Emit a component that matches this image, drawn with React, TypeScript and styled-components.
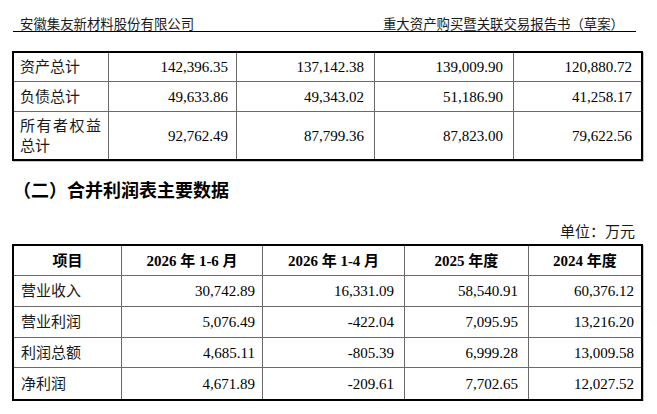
import styled, { createGlobalStyle } from "styled-components"

const GlobalStyle = createGlobalStyle`
    body {
        margin: 0;
        background: #ffffff;
        color: #000000;
        font-family: "Liberation Serif", "Noto Sans CJK SC", serif;
        text-spacing-trim: space-all;
    }
`

type Row = {
    label: string
    values: string[]
}

const balanceRows: Row[] = [
    { label: '资产总计', values: ['142,396.35', '137,142.38', '139,009.90', '120,880.72'] },
    { label: '负债总计', values: ['49,633.86', '49,343.02', '51,186.90', '41,258.17'] },
    { label: '所有者权益总计', values: ['92,762.49', '87,799.36', '87,823.00', '79,622.56'] },
]

const profitHeader = ['项目', '2026 年 1-6 月', '2026 年 1-4 月', '2025 年度', '2024 年度']

const profitRows: Row[] = [
    { label: '营业收入', values: ['30,742.89', '16,331.09', '58,540.91', '60,376.12'] },
    { label: '营业利润', values: ['5,076.49', '-422.04', '7,095.95', '13,216.20'] },
    { label: '利润总额', values: ['4,685.11', '-805.39', '6,999.28', '13,009.58'] },
    { label: '净利润', values: ['4,671.89', '-209.61', '7,702.65', '12,027.52'] },
]

const App = () => {
    const balancePad = [8, 10, 10, 9]
    const profitPad = [7, 10, 10, 7]
    const lastBalance = balanceRows.length - 1
    const lastProfit = profitRows.length

    return (
        <Page>
            <GlobalStyle />
            <Header>
                <span>安徽集友新材料股份有限公司</span>
                <span>重大资产购买暨关联交易报告书（草案）</span>
            </Header>

            <Table
                $cols="95px 128px 138px 139px 127px"
                $rows="29px 30px 47px"
                style={{ marginTop: 19 }}
            >
                {balanceRows.map((row, r) => [
                    <LabelCell key={`l${r}`} $pl={6} $last={r === lastBalance}>
                        <Label>{row.label}</Label>
                    </LabelCell>,
                    ...row.values.map((v, c) => (
                        <NumCell
                            key={`v${r}-${c}`}
                            $pr={balancePad[c]}
                            $last={r === lastBalance}
                            $end={c === row.values.length - 1}
                        >
                            {v}
                        </NumCell>
                    )),
                ])}
            </Table>

            <Heading>（二）合并利润表主要数据</Heading>
            <Unit>单位：万元</Unit>

            <Table
                $cols="108px 141px 142px 124px 112px"
                $rows="30px 31px 31px 30px 31px"
                style={{ marginTop: 2 }}
            >
                {profitHeader.map((h, c) => (
                    <HeadCell key={h} $end={c === profitHeader.length - 1}>
                        {h}
                    </HeadCell>
                ))}
                {profitRows.map((row, r) => [
                    <LabelCell key={`l${r}`} $pl={7} $last={r + 1 === lastProfit}>
                        <Label>{row.label}</Label>
                    </LabelCell>,
                    ...row.values.map((v, c) => (
                        <NumCell
                            key={`v${r}-${c}`}
                            $pr={profitPad[c]}
                            $last={r + 1 === lastProfit}
                            $end={c === row.values.length - 1}
                        >
                            {v}
                        </NumCell>
                    )),
                ])}
            </Table>
        </Page>
    )
}

export default App

const Page = styled.div`
    width: 631px;
    margin-left: 12px;
`

const Header = styled.div`
    display: flex;
    justify-content: space-between;
    width: 623px;
    margin-left: 1px;
    padding: 16px 12px 0 7px;
    box-sizing: border-box;
    border-bottom: 1px solid #000000;
    font-family: "Noto Sans CJK SC", sans-serif;
    font-variant-east-asian: full-width;
    font-size: 13.4px;
    line-height: 15px;
    color: #1a1a1a;
`

const Table = styled.div<{ $cols: string; $rows: string }>`
    display: grid;
    grid-template-columns: ${p => p.$cols};
    grid-template-rows: ${p => p.$rows};
    border: 2px solid #000000;
    box-shadow: 1px 1px 0 rgba(0, 0, 0, 0.22);
    font-size: 15px;
    line-height: 20px;
`

const Cell = styled.div<{ $last?: boolean; $end?: boolean }>`
    display: flex;
    align-items: center;
    box-sizing: border-box;
    border-right: ${p => (p.$end ? 'none' : '1px solid #6a6a6a')};
    border-bottom: ${p => (p.$last ? 'none' : '1px solid #6a6a6a')};
`

const LabelCell = styled(Cell)<{ $pl: number }>`
    padding: 0 7px 0 ${p => p.$pl}px;
    color: #1a1a1a;
`

const Label = styled.span`
    flex: 1;
    text-align: justify;
`

const NumCell = styled(Cell)<{ $pr: number }>`
    justify-content: flex-end;
    padding-right: ${p => p.$pr}px;
`

const HeadCell = styled(Cell)`
    justify-content: center;
    font-weight: 700;
`

const Heading = styled.div`
    margin-top: 20px;
    padding-left: 1px;
    font-size: 18px;
    line-height: 20px;
    font-weight: 700;
`

const Unit = styled.div`
    margin-top: 21px;
    padding-right: 8px;
    text-align: right;
    font-size: 15px;
    line-height: 20px;
    color: #1a1a1a;
`
